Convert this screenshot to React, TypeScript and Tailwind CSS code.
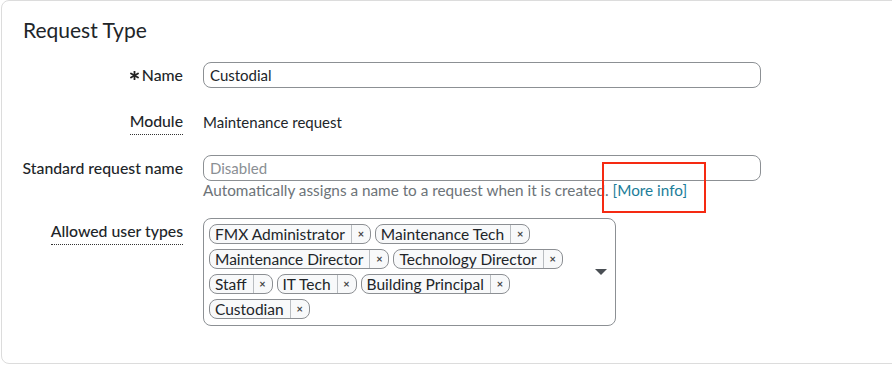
import React from 'react';

const userTypes = [
    'FMX Administrator',
    'Maintenance Tech',
    'Maintenance Director',
    'Technology Director',
    'Staff',
    'IT Tech',
    'Building Principal',
    'Custodian',
];

const Asterisk = () => (
    <svg width="9" height="9" viewBox="0 0 10 10" className="mr-[3px]">
        <g stroke="#222" strokeWidth="2" strokeLinecap="round">
            <line x1="5" y1="0.5" x2="5" y2="9.5" />
            <line x1="1.1" y1="2.75" x2="8.9" y2="7.25" />
            <line x1="1.1" y1="7.25" x2="8.9" y2="2.75" />
        </g>
    </svg>
);

const Tag = ({ label }: { label: string }) => (
    <span className="flex h-[20px] items-stretch rounded-[8px] border border-[#8c8f93] bg-[#f8f9fa] text-[15.5px] leading-[18px] text-[#212529]">
        <span className="flex items-center pl-[5px] pr-[6px]">{label}</span>
        <span className="flex w-[19px] items-center justify-center border-l border-[#b9bdc1] text-[11px] font-bold text-[#444]">×</span>
    </span>
);

const Label = ({ children, dotted }: { children: React.ReactNode; dotted?: boolean }) => (
    <span
        className={
            dotted
                ? 'whitespace-nowrap border-b border-dotted border-[#333] pb-[1px] text-[15.8px] font-medium text-[#212529]'
                : 'whitespace-nowrap text-[15.8px] font-medium text-[#212529]'
        }
    >
        {children}
    </span>
);

export default function App() {
    return (
        <div className="h-[365px] w-[892px] overflow-hidden bg-white" style={{ fontFamily: 'Lato, "Open Sans", sans-serif' }}>
            <div className="relative ml-[1px] h-[364px] w-[910px] rounded-[8px] border border-[#dcdcdc] px-[21px] pt-[17px] text-[15px] text-[#212529]">
                <h1 className="text-[21px] leading-[24px] text-[#212529]">Request Type</h1>

                <div className="mt-[20px] grid grid-cols-[160px_558px] gap-x-[20px]">
                    <div className="flex h-[26px] items-center justify-end">
                        <Asterisk />
                        <Label>Name</Label>
                    </div>
                    <div className="flex h-[26px] items-center rounded-[8px] border border-[#8c9094] px-[6px]">Custodial</div>

                    <div className="mt-[23px] flex h-[22px] items-center justify-end">
                        <Label dotted>Module</Label>
                    </div>
                    <div className="mt-[23px] flex h-[22px] items-center">Maintenance request</div>

                    <div className="mt-[22px] flex h-[26px] items-center justify-end">
                        <Label>Standard request name</Label>
                    </div>
                    <div className="mt-[22px]">
                        <div className="flex h-[26px] items-center rounded-[8px] border border-[#8c9094] px-[6px] text-[#8a8f94]">
                            Disabled
                        </div>
                        <div className="h-[18px] whitespace-nowrap text-[15.3px] leading-[18px] text-[#6c7378]">
                            Automatically assigns a name to a request when it is created.{' '}
                            <span className="text-[#1b7d99]">[More info]</span>
                        </div>
                    </div>

                    <div className="mt-[20px] flex h-[26px] items-center justify-end">
                        <Label dotted>Allowed user types</Label>
                    </div>
                    <div className="mt-[19px]">
                        <div className="flex h-[108px] w-[413px] items-center rounded-[8px] border border-[#8c9094] py-[5px] pl-[5px] pr-[8px]">
                            <div className="flex flex-1 flex-wrap content-start gap-x-[4px] gap-y-[5px] self-stretch">
                                {userTypes.map((t) => (
                                    <Tag key={t} label={t} />
                                ))}
                            </div>
                            <svg width="12" height="7" viewBox="0 0 12 7">
                                <path d="M0 0 L12 0 L6 6 Z" fill="#4a4f54" />
                            </svg>
                        </div>
                    </div>
                </div>

                <div className="absolute left-[600px] top-[161px] h-[51px] w-[104px] border-[2.5px] border-[#f52a12]" />
            </div>
        </div>
    );
}
